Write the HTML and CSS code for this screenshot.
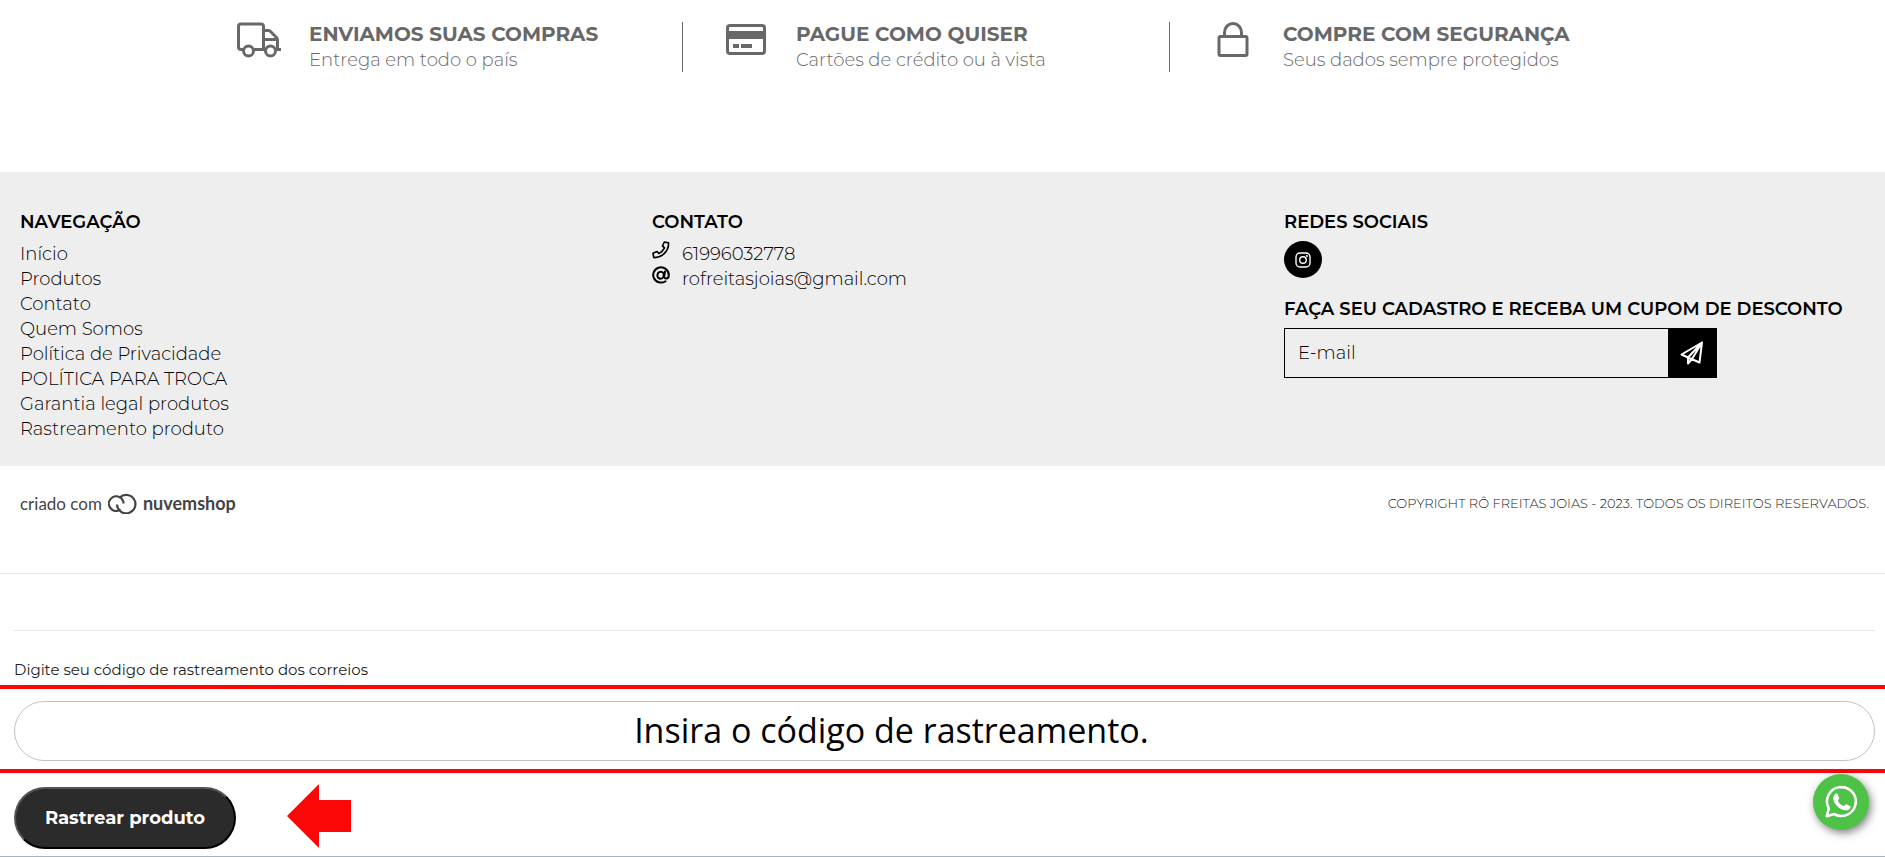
FILE: index.html
```html
<!DOCTYPE html>
<html lang="pt-BR">
<head>
<meta charset="utf-8">
<meta name="viewport" content="width=device-width, initial-scale=1">
<title>Rô Freitas Joias</title>
<link rel="stylesheet" href="styles.css">
</head>
<body>
<section class="services">
  <div class="services-grid">
    <div class="service">
      <div class="service-icon">
        <svg width="46" height="36" viewBox="0 0 46 36" fill="none" stroke="currentColor" stroke-width="3">
          <path d="M7 27.500H5q-2.500 0-2.500-2.500V4.500Q2.500 2 5 2h20q2.500 0 2.500 2.500v23H17M27.500 8.500h4.500q1.500 0 2.500 1l6 6q1 1 1 2.500v9.500M27.500 17.500h14M27.500 27.500h1M40 27.500h5"/>
          <circle cx="12.500" cy="29" r="5"/><circle cx="34.500" cy="29" r="5"/>
        </svg>
      </div>
      <div><h3 class="service-title">ENVIAMOS SUAS COMPRAS</h3><p class="service-text">Entrega em todo o país</p></div>
    </div>
    <div class="service">
      <div class="service-icon">
        <svg width="40" height="35" viewBox="0 0 40 35" fill="none" stroke="currentColor" stroke-width="3">
          <rect x="1.500" y="3.500" width="37" height="28" rx="2.500"/>
          <path d="M1 13h38" stroke-width="8"/><path d="M7 24h6M15 24h11" stroke-width="4"/>
        </svg>
      </div>
      <div><h3 class="service-title">PAGUE COMO QUISER</h3><p class="service-text">Cartões de crédito ou à vista</p></div>
    </div>
    <div class="service">
      <div class="service-icon">
        <svg width="32" height="35" viewBox="0 0 32 35" fill="none" stroke="currentColor" stroke-width="3">
          <rect x="2" y="14.500" width="28" height="19" rx="1.500"/>
          <path d="M7.500 14.500v-4a8.500 9 0 0 1 17 0v4"/>
        </svg>
      </div>
      <div><h3 class="service-title">COMPRE COM SEGURANÇA</h3><p class="service-text">Seus dados sempre protegidos</p></div>
    </div>
  </div>
</section>

<footer>
  <div class="footer-main">
    <nav>
      <h4 class="footer-title">NAVEGAÇÃO</h4>
      <ul class="footer-list">
        <li><a href="#">Início</a></li>
        <li><a href="#">Produtos</a></li>
        <li><a href="#">Contato</a></li>
        <li><a href="#">Quem Somos</a></li>
        <li><a href="#">Política de Privacidade</a></li>
        <li><a href="#">POLÍTICA PARA TROCA</a></li>
        <li><a href="#">Garantia legal produtos</a></li>
        <li><a href="#">Rastreamento produto</a></li>
      </ul>
    </nav>
    <div>
      <h4 class="footer-title">CONTATO</h4>
      <ul class="footer-list">
        <li class="contact">
          <svg width="18" height="18" viewBox="0 0 18 18" fill="none" stroke="currentColor" stroke-width="1.700" stroke-linejoin="round"><path d="M12.300 1l4.200.8c.5 8-6.500 15.200-14.700 14.700L1 12.300l4-1.800 1.800 2c2.600-1.300 4.400-3.100 5.700-5.700l-2-1.800z"/></svg>
          <a href="tel:61996032778">61996032778</a>
        </li>
        <li class="contact">
          <svg width="18" height="18" viewBox="0 0 18 18" fill="none" stroke="currentColor" stroke-width="2" stroke-linecap="round"><path d="M13.500 15.200A7.800 7.600 0 1 1 16.800 9c0 2.200-1 3.500-2.500 3.500s-2.300-1-2-2.700L13 5.500"/><ellipse cx="8.600" cy="9.200" rx="3.200" ry="3.500" transform="rotate(18 8.600 9.200)"/></svg>
          <a href="mailto:rofreitasjoias@gmail.com">rofreitasjoias@gmail.com</a>
        </li>
      </ul>
    </div>
    <div>
      <h4 class="footer-title">REDES SOCIAIS</h4>
      <a class="social" href="#" aria-label="Instagram">
        <svg width="16" height="16" viewBox="0 0 16 16" fill="none" stroke="currentColor" stroke-width="1.400"><rect x="1" y="1" width="14" height="14" rx="4"/><circle cx="8" cy="8" r="3.300"/><circle cx="12" cy="4" r=".4"/></svg>
      </a>
      <h4 class="footer-title">FAÇA SEU CADASTRO E RECEBA UM CUPOM DE DESCONTO</h4>
      <form class="newsletter">
        <input class="newsletter-input" type="email" placeholder="E-mail" aria-label="E-mail">
        <button class="newsletter-button" type="button" aria-label="Enviar">
          <svg width="24" height="24" viewBox="0 0 24 24" fill="none" stroke="currentColor" stroke-width="2" stroke-linejoin="round"><path d="M22 1.500L1.500 13.500l6.500 3L19.500 21.500zM22 1.500L8 16.500v6l4-4.500zM22 1.500L12 18"/></svg>
        </button>
      </form>
    </div>
  </div>
  <div class="footer-legal">
    <a class="brand" href="#">
      <span>criado com</span>
      <svg width="29" height="21" viewBox="0 0 29 21" fill="none" stroke="currentColor" stroke-width="2.200"><path d="M11.800 4.500A9.200 9.200 0 1 1 9 11.500Q8.900 15.500 12.500 17.500"/><path d="M11.800 17A7.300 7.300 0 1 1 12 4.400Q15.500 6.500 15.500 10.500"/></svg>
      <span class="brand-name">nuvemshop</span>
    </a>
    <p class="copyright">COPYRIGHT RÔ FREITAS JOIAS - 2023. TODOS OS DIREITOS RESERVADOS.</p>
  </div>
</footer>

<form class="tracking">
  <hr class="tracking-rule">
  <label class="tracking-label" for="code">Digite seu código de rastreamento dos correios</label>
  <div class="tracking-highlight">
    <input class="tracking-input" id="code" type="text" placeholder="Insira o código de rastreamento.">
  </div>
  <div class="tracking-actions">
    <button class="tracking-button" type="button">Rastrear produto</button>
    <svg width="65" height="66" viewBox="0 0 65 66"><path fill="#fb0707" d="M0 33L32 1v16h32v32H32v16z"/></svg>
  </div>
</form>

<a class="whatsapp" href="#" aria-label="WhatsApp">
  <svg width="34" height="34" viewBox="0 0 34 34"><path fill="none" stroke="currentColor" stroke-width="2.600" stroke-linejoin="round" d="M2.800 31.200l2-7.700a14.400 14.400 0 1 1 5.400 5.500z"/><path fill="currentColor" d="M11.300 9c.8-.7 2-.6 2.400.3l1.500 3.500c.4 1.100-1.300 2.200-1.300 2.900.9 2.300 3.200 4.400 5.700 5.300.9.100 1.900-2 2.900-1.800l3.500 1.700c1.100.6.500 2.300-.3 3.100-2.300 2.100-5.700 1.400-8.800-.1-3.100-1.600-5.600-4.300-7-7.300-1.200-2.800-.9-5.700 1.400-7.600z"/></svg>
</a>
</body>
</html>
```
FILE: styles.css
```css
* { box-sizing: border-box; }

body {
  margin: 0;
  background: #fff;
  color: #000;
  font-family: Montserrat, Inter, "Open Sans", sans-serif;
  font-size: 18px;
  font-weight: 300;
  line-height: 25px;
}

h3, h4, p, ul { margin: 0; padding: 0; }
a { color: inherit; text-decoration: none; }
svg { display: block; flex: none; }
input, button { font-family: inherit; }

.services {
  padding: 22px 32px 100px 0;
  color: #686868;
}

.services-grid {
  display: grid;
  grid-template-columns: repeat(3, 1fr);
  max-width: 1461px;
  margin: 0 auto;
}

.service {
  display: flex;
  height: 50px;
  padding-left: 36px;
  border-right: 1px solid #686868;
}

.service:last-child { border-right: 0; }

.service-icon {
  display: flex;
  justify-content: center;
  align-items: flex-start;
  width: 54px;
  margin-right: 23px;
}

.service-title {
  margin-bottom: 1px;
  font-size: 20px;
  font-weight: 700;
  line-height: 25px;
}

.footer-main {
  display: grid;
  grid-template-columns: repeat(3, 1fr);
  gap: 31px;
  padding: 38px 0 24px 20px;
  background: #eee;
}

.footer-title {
  margin-bottom: 6px;
  font-size: 18px;
  font-weight: 600;
  line-height: 25px;
}

.footer-list {
  padding-top: 1px;
  list-style: none;
}

.contact {
  display: flex;
  gap: 12px;
}

.contact svg { margin-top: -1px; }

.social {
  display: flex;
  align-items: center;
  justify-content: center;
  width: 38px;
  height: 37px;
  margin-bottom: 19px;
  border-radius: 50%;
  background: #000;
  color: #fff;
}

.newsletter {
  display: flex;
  width: 72%;
  height: 50px;
  border: 1px solid #000;
}

.newsletter-input {
  flex: 1;
  min-width: 0;
  padding: 0 13px;
  border: 0;
  background: transparent;
  font-size: 18px;
  font-weight: 300;
}

.newsletter-input::placeholder { color: #000; opacity: 1; }

.newsletter-button {
  display: flex;
  align-items: center;
  justify-content: center;
  width: 48px;
  padding: 0;
  border: 0;
  background: #000;
  color: #fff;
}

.footer-legal {
  display: flex;
  align-items: flex-start;
  justify-content: space-between;
  min-height: 108px;
  padding: 25px 16px 0 20px;
  border-bottom: 1px solid #e8e8e8;
}

.brand {
  display: flex;
  align-items: center;
  gap: 6px;
  color: #444;
  font-family: Lato, sans-serif;
  font-size: 17px;
  font-weight: 400;
}

.brand-name {
  font-size: 18px;
  font-weight: 700;
}

.copyright {
  color: #222;
  font-size: 13px;
}

.tracking {
  padding-top: 56px;
  border-bottom: 1px solid #a4b6bc;
}

.tracking-rule {
  height: 1px;
  margin: 0 10px 0 14px;
  border: 0;
  background: #e8e8e8;
}

.tracking-label {
  display: block;
  padding: 26px 14px 3px;
  color: #222;
  font-size: 15px;
  font-weight: 400;
}

.tracking-highlight {
  padding: 12px 10px 8px 14px;
  border-top: 4px solid #fb0707;
  border-bottom: 4px solid #fb0707;
}

.tracking-input {
  display: block;
  width: 100%;
  height: 60px;
  padding: 0 30px 2px calc(33% + 5px);
  border: 1px solid #c2c2c2;
  border-radius: 30px;
  background: #fff;
  font-family: "Open Sans", "Noto Sans", sans-serif;
  font-size: 34px;
  font-weight: 400;
}

.tracking-input::placeholder { color: #000; opacity: 1; }

.tracking-actions {
  display: flex;
  align-items: flex-end;
  gap: 51px;
  padding: 10px 14px 7px;
}

.tracking-button {
  width: 222px;
  height: 62px;
  padding: 0;
  border: 2px outset #000;
  border-radius: 31px;
  background: #2b2b2b;
  color: #fff;
  font-size: 18px;
  font-weight: 700;
}

.whatsapp {
  position: fixed;
  right: 16px;
  bottom: 27px;
  display: flex;
  align-items: center;
  justify-content: center;
  width: 56px;
  height: 56px;
  border-radius: 50%;
  background: #4dc247;
  box-shadow: 2px 3px 8px rgba(0, 0, 0, 0.5);
  color: #fff;
}
```
